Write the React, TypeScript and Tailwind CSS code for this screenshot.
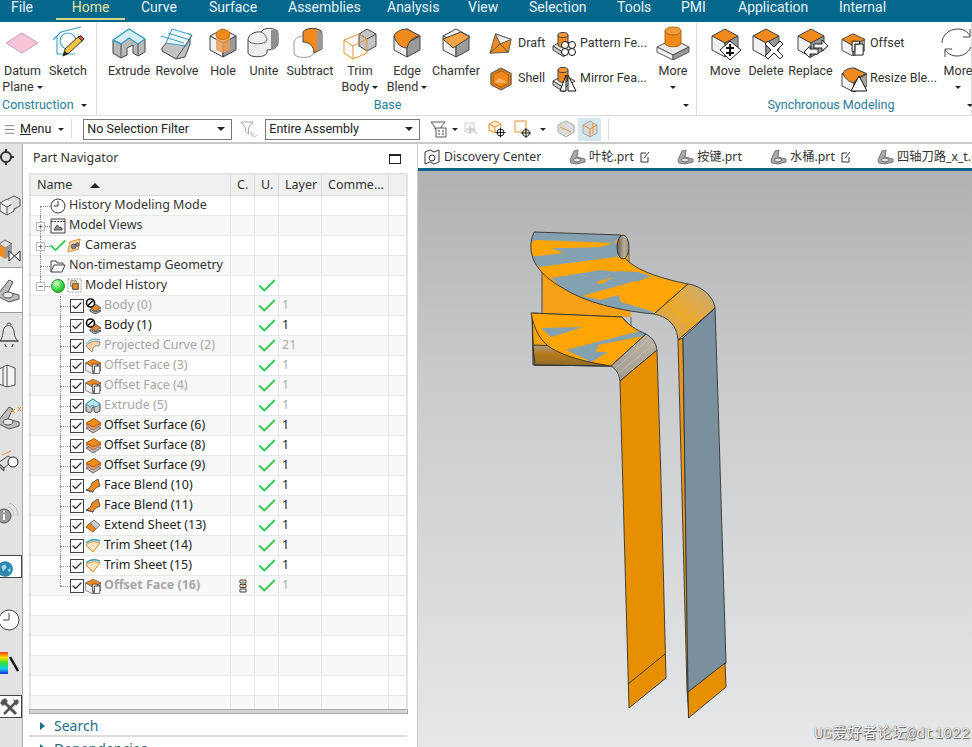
import type { ReactNode } from "react";
import { Check, Menu as MenuIcon } from "lucide-react";

const tabs = [
  { name: "File", width: 56, left: 11 },
  { name: "Home", width: 69, left: 16 },
  { name: "Curve", width: 68, left: 16 },
  { name: "Surface", width: 79, left: 16 },
  { name: "Assemblies", width: 99, left: 16 },
  { name: "Analysis", width: 81, left: 16 },
  { name: "View", width: 61, left: 16 },
  { name: "Selection", width: 88, left: 16 },
  { name: "Tools", width: 64, left: 16 },
  { name: "PMI", width: 57, left: 16 },
  { name: "Application", width: 101, left: 16 },
  { name: "Internal", width: 80, left: 16 },
];

const Caret = ({ className = "" }: { className?: string }) => (
  <span className={`inline-block w-0 h-0 border-x-[3px] border-x-transparent border-t-[3px] border-t-[#222] ${className}`} />
);

const Icon = ({ size = 34, box = 34, children }: { size?: number; box?: number; children: ReactNode }) => (
  <svg width={size} height={size} viewBox={`0 0 ${box} ${box}`} className="shrink-0" strokeLinejoin="round">
    {children}
  </svg>
);

const Faces = ({ top = "#eeeeee", left = "#f1f1f1", right = "#9a9a9a" }: { top?: string; left?: string; right?: string }) => (
  <g stroke="#444" strokeWidth="1">
    <path d="M17 3 30 10 17 17 4 10Z" fill={top} />
    <path d="M4 10 17 17V31L4 24Z" fill={left} />
    <path d="M30 10 17 17V31L30 24Z" fill={right} />
  </g>
);

const MiniFaces = () => (
  <g stroke="#444" strokeWidth="1">
    <path d="M13 2 26 8 13 15 1 8Z" fill="#f08a1c" />
    <path d="M1 8 13 15V26L1 20Z" fill="#f4f4f4" />
    <path d="M26 8 13 15V26L26 20Z" fill="#a5a5a5" />
  </g>
);

const DatumIcon = () => (
  <Icon><path d="M0 17 16 7 32 17 16 27Z" fill="#f8c4d8" stroke="#d59ab4" /></Icon>
);

const SketchIcon = () => (
  <Icon>
    <g fill="none" stroke="#3aa0c0" strokeWidth="1.1">
      <path d="M2 14 10 6 30 1" />
      <path d="M6 10V28H24" />
      <circle cx="17" cy="15" r="8" />
    </g>
    <path d="M12 30 14 23 28 10 32 14 18 27Z" fill="#f4c542" stroke="#333" />
    <path d="M27 11 31 15 33 13 30 9.5Z" fill="#d9534f" stroke="#333" />
    <path d="M12 30 14 25 17 28Z" fill="#222" />
  </Icon>
);

const ExtrudeIcon = () => (
  <Icon>
    <path d="M1 14V27L9 32 15 29V22L21 19V27L26 30 33 26V13L17 3Z" fill="#b9b9b9" stroke="#444" />
    <path d="M1 14 17 3 33 13 26 18 17 12 9 18Z" fill="#d6eef6" stroke="#3aa0c0" strokeWidth="1.4" />
    <path d="M9 18V32M26 18V30" stroke="#555" />
  </Icon>
);

const RevolveIcon = () => (
  <Icon>
    <path d="M2 22 12 10 30 8 30 18 25 31 16 33 2 25Z" fill="#c2c2c2" stroke="#444" />
    <path d="M12 3 32 9 26 20 6 17Z" fill="#eef6f9" stroke="#3aa0c0" />
    <path d="M1 10 24 17M8 7 30 14" stroke="#3aa0c0" fill="none" />
    <path d="M16 33 25 20 32 9" fill="none" stroke="#555" />
  </Icon>
);

const HoleIcon = () => (
  <Icon>
    <Faces />
    <path d="M10 8V24L17 27 24 24V8Z" fill="#eb9c57" opacity="0.85" />
    <ellipse cx="17" cy="8.5" rx="7" ry="5" fill="#f08a1c" stroke="#c87010" />
  </Icon>
);

const UniteIcon = () => (
  <Icon>
    <path d="M1 14V27C2 32 18 32 20 27V24C28 24 31 20 31 17V7C30 1 16 1 14 6 7 5 1 9 1 14Z" fill="#eeeeee" stroke="#444" />
    <path d="M24 24C29 23 31 20 31 17V7C31 5 28 4 26 4L24 4Z" fill="#8e8e8e" />
    <path d="M1 14C2 19 19 19 20 14 20 11 18 8 14 6" fill="none" stroke="#666" />
  </Icon>
);

const SubtractIcon = () => (
  <Icon>
    <path d="M1 17V27C2 33 19 33 21 27V17" fill="#fff" stroke="#999" />
    <path d="M1 17C2 12 6 10 9 10" fill="none" stroke="#999" />
    <path d="M10 6V16C16 16 21 20 21 27L29 23V7C28 1 13 1 10 6Z" fill="#f08a1c" stroke="#444" />
    <path d="M24 4C28 5 29 6 29 8V23L24 25Z" fill="#999" />
  </Icon>
);

const TrimIcon = () => (
  <Icon>
    <path d="M16 8 24 3 33 8V20L24 25 16 20Z" fill="#c4c4c4" stroke="#444" />
    <path d="M16 8 24 13 33 8" fill="none" stroke="#444" />
    <path d="M1 14 16 8 24 13V27L10 33 1 27ZM1 14 10 20V33M10 20 24 13" fill="none" stroke="#e8912d" />
  </Icon>
);

const BlendIcon = () => (
  <Icon>
    <Faces top="#f08a1c" left="#eeeeee" />
    <path d="M4 10C6 5 12 3 17 3L30 10C24 11 19 14 17 22 12 22 6 18 4 10Z" fill="#f08a1c" stroke="#444" />
  </Icon>
);

const ChamferIcon = () => (
  <Icon>
    <Faces />
    <path d="M4 13 22 6 31 11 14 22Z" fill="#f5a445" stroke="#444" />
  </Icon>
);

const DraftIcon = () => (
  <Icon size={24} box={26}>
    <path d="M7 2 24 8 21 22 1 23Z" fill="#f08a1c" stroke="#555" />
    <path d="M7 2 24 8 12 13Z" fill="#eeeeee" stroke="#555" />
    <path d="M12 13 1 23M12 13 21 22" stroke="#555" fill="none" />
  </Icon>
);

const ShellIcon = () => (
  <Icon size={24} box={26}>
    <path d="M13 1 24 7V19L13 25 2 19V7Z" fill="#d98020" stroke="#444" />
    <path d="M13 4 21 8.5V17.5L13 22 5 17.5V8.5Z" fill="#f08a1c" stroke="#a65d10" />
    <path d="M5 17 11 12 21 17" fill="#f6b26b" />
  </Icon>
);

const FeatureBase = () => (
  <g stroke="#444">
    <path d="M1 15 12 9 23 15 12 22Z" fill="#e8e8e8" />
    <path d="M1 15V19L12 26V22Z" fill="#cccccc" />
    <path d="M6 4V14C6 17 16 17 16 14V4Z" fill="#f08a1c" />
    <ellipse cx="11" cy="4" rx="5" ry="2.5" fill="#f59a35" />
  </g>
);

const PatternIcon = () => (
  <Icon size={26} box={26}>
    <FeatureBase />
    <g fill="#fff" stroke="#111">
      <circle cx="13" cy="14" r="3.5" /><circle cx="20" cy="14" r="3.5" />
      <circle cx="13" cy="21" r="3.5" /><circle cx="20" cy="21" r="3.5" />
    </g>
  </Icon>
);

const MirrorIcon = () => (
  <Icon size={26} box={26}>
    <FeatureBase />
    <path d="M8 25 14 9V25ZM16 25V9L24 25Z" fill="#fff" stroke="#111" />
  </Icon>
);

const MoreIcon = () => (
  <Icon>
    <path d="M1 21 17 13 33 21 17 29Z" fill="#e8e8e8" stroke="#555" />
    <path d="M1 21V26L17 34V29Z" fill="#f3f3f3" stroke="#555" />
    <path d="M33 21V26L17 34V29Z" fill="#999" stroke="#555" />
    <path d="M9 5V17C9 22 25 22 25 17V5Z" fill="#f08a1c" stroke="#b36a14" />
    <ellipse cx="17" cy="5" rx="8" ry="4" fill="#f59a35" stroke="#b36a14" />
  </Icon>
);

const MoveIcon = () => (
  <Icon>
    <Faces top="#f08a1c" />
    <path d="M22 15 33 24 22 34 12 24Z" fill="#fff" stroke="#222" />
    <path d="M18 21H21V18H23V21H26V23H23V26H26V28H23V30H21V28H18V26H21V23H18Z" fill="#111" />
  </Icon>
);

const DeleteIcon = () => (
  <Icon>
    <Faces top="#f08a1c" />
    <path d="M16 18 19 15 25 21 31 15 34 18 28 24 34 30 31 33 25 27 19 33 16 30 22 24Z" fill="#fff" stroke="#222" />
  </Icon>
);

const ReplaceIcon = () => (
  <Icon>
    <Faces top="#f08a1c" />
    <path d="M20 18H28V14L34 20 28 25V22H20Z" fill="#fff" stroke="#222" />
    <path d="M24 23H16V20L10 26 16 32V28H24Z" fill="#fff" stroke="#222" />
  </Icon>
);

const OffsetSmall = ({ size = 24 }: { size?: number }) => (
  <Icon size={size} box={26}>
    <MiniFaces />
    <path d="M15 13H24V25H15Z" fill="#fff" stroke="#111" />
    <path d="M12 10H20V13H15V21H12Z" fill="#fff" stroke="#111" />
  </Icon>
);

const ResizeIcon = () => (
  <Icon size={26} box={26}>
    <MiniFaces />
    <path d="M2 7C4 3 9 2 13 2L26 8C21 9 15 12 13 17 8 16 3 12 2 7Z" fill="#f08a1c" stroke="#444" />
    <path d="M18 10 26 25H10Z" fill="#fff" stroke="#111" />
  </Icon>
);

const RefreshIcon = () => (
  <Icon>
    <g fill="none" stroke="#444" strokeWidth="1">
      <path d="M1 17C1 9 8 3 17 3 23 3 27 6 29 10" />
      <path d="M29 3V11H22" />
      <path d="M30 21C27 27 22 30 16 30 10 30 6 27 4 24" />
      <path d="M4 31V23H11" />
    </g>
  </Icon>
);

const LargeButton = ({ width, icon, label, second, caret }: { width: number; icon: ReactNode; label: string; second?: string; caret?: boolean }) => (
  <div className="flex flex-col items-center shrink-0" style={{ width }}>
    {icon}
    <div className="mt-[3px] text-center leading-4 whitespace-nowrap">
      <div>{label}</div>
      {caret && (
        <div className="flex items-center justify-center gap-[3px] h-4">
          {second}
          <Caret />
        </div>
      )}
    </div>
  </div>
);

const SmallButton = ({ icon, label, gap = 5 }: { icon: ReactNode; label: string; gap?: number }) => (
  <div className="flex items-center h-[35px] whitespace-nowrap" style={{ gap }}>
    {icon}
    <span>{label}</span>
  </div>
);

const RibbonGroup = ({ width, label, children, labelClass = "justify-center", caretClass = "right-[7px]" }: { width: number; label: string; children: ReactNode; labelClass?: string; caretClass?: string }) => (
  <div className="relative flex flex-col h-full shrink-0 border-r border-[#dcdcdc]" style={{ width }}>
    <div className="flex-1 flex items-start pt-[4px]">{children}</div>
    <div className={`flex h-[20px] items-center text-[#2b7c99] ${labelClass}`}>{label}</div>
    <Caret className={`absolute bottom-[8px] ${caretClass}`} />
  </div>
);

const Ribbon = () => (
  <div className="flex h-[94px] shrink-0 text-[12.5px] text-[#333] bg-white border-b border-[#dcdcdc] overflow-hidden [font-family:Roboto,sans-serif]">
    <RibbonGroup width={97} label="Construction" labelClass="justify-start pl-[2px]" caretClass="right-[9px]">
      <LargeButton width={45} icon={<DatumIcon />} label="Datum" second="Plane" caret />
      <LargeButton width={46} icon={<SketchIcon />} label="Sketch" />
    </RibbonGroup>
    <RibbonGroup width={600} label="Base" labelClass="justify-center pr-[18px]">
      <div className="w-[9px] shrink-0" />
      <LargeButton width={46} icon={<ExtrudeIcon />} label="Extrude" />
      <LargeButton width={50} icon={<RevolveIcon />} label="Revolve" />
      <LargeButton width={42} icon={<HoleIcon />} label="Hole" />
      <LargeButton width={40} icon={<UniteIcon />} label="Unite" />
      <LargeButton width={52} icon={<SubtractIcon />} label="Subtract" />
      <LargeButton width={48} icon={<TrimIcon />} label="Trim" second="Body" caret />
      <LargeButton width={46} icon={<BlendIcon />} label="Edge" second="Blend" caret />
      <LargeButton width={52} icon={<ChamferIcon />} label="Chamfer" />
      <div className="flex flex-col w-[70px] shrink-0 pl-[7px]">
        <SmallButton icon={<DraftIcon />} label="Draft" />
        <SmallButton icon={<ShellIcon />} label="Shell" />
      </div>
      <div className="flex flex-col w-[98px] shrink-0">
        <SmallButton icon={<PatternIcon />} label="Pattern Fe..." gap={2} />
        <SmallButton icon={<MirrorIcon />} label="Mirror Fea..." gap={2} />
      </div>
      <LargeButton width={46} icon={<MoreIcon />} label="More" caret />
    </RibbonGroup>
    <RibbonGroup width={275} label="Synchronous Modeling" labelClass="justify-center pr-[6px]" caretClass="right-[-2px]">
      <div className="w-[6px] shrink-0" />
      <LargeButton width={44} icon={<MoveIcon />} label="Move" />
      <LargeButton width={38} icon={<DeleteIcon />} label="Delete" />
      <LargeButton width={51} icon={<ReplaceIcon />} label="Replace" />
      <div className="flex flex-col w-[99px] shrink-0 pl-[5px]">
        <SmallButton icon={<OffsetSmall />} label="Offset" />
        <SmallButton icon={<ResizeIcon />} label="Resize Ble..." gap={3} />
      </div>
      <LargeButton width={46} icon={<RefreshIcon />} label="More" caret />
    </RibbonGroup>
  </div>
);

const SelectBox = ({ width, label }: { width: number; label: string }) => (
  <div className="flex items-center justify-between h-[21px] px-[3px] border border-[#777] bg-white shrink-0" style={{ width }}>
    <span>{label}</span>
    <Caret className="border-x-[4px] border-t-[4px] mr-[3px]" />
  </div>
);

const ToolGlyph = ({ children }: { children: ReactNode }) => (
  <svg width="18" height="18" viewBox="0 0 18 18" className="shrink-0" fill="none">
    {children}
  </svg>
);

const Toolbar = () => (
  <div className="flex items-center h-[28px] shrink-0 pl-[3px] text-[12.5px] text-[#222] bg-white border-b-2 border-[#c8c8c8] [font-family:Roboto,sans-serif]">
    <MenuIcon size={13} strokeWidth={1} />
    <span className="ml-[4px]"><span className="underline">M</span>enu</span>
    <Caret className="ml-[7px]" />
    <div className="w-px h-[20px] bg-[#ddd] ml-[7px] mr-[11px]" />
    <SelectBox width={149} label="No Selection Filter" />
    <div className="w-[33px] flex justify-center">
      <ToolGlyph>
        <path d="M1 2H13L8.5 8V14L5.5 11.5V8Z" stroke="#aaa" />
        <path d="M17 15C16 17 12 17 11 14M11 11V14H14" stroke="#bbb" />
      </ToolGlyph>
    </div>
    <SelectBox width={155} label="Entire Assembly" />
    <div className="ml-[10px] flex items-center gap-[1px]">
      <ToolGlyph>
        <path d="M1 2H15L11 7V9H5V7Z" stroke="#555" />
        <path d="M6 8H16V17H6Z" fill="#fff" stroke="#555" />
        <path d="M8 11H10M12 11H14M8 14H10M12 14H14" stroke="#333" />
      </ToolGlyph>
      <Caret className="ml-[3px]" />
    </div>
    <div className="ml-[6px]">
      <ToolGlyph>
        <path d="M1 3H10V12H1Z" stroke="#ccc" />
        <path d="M6 5V14M2 9H11M12 14A3 3 0 1 0 6 12" stroke="#bbb" />
      </ToolGlyph>
    </div>
    <div className="ml-[6px]">
      <ToolGlyph>
        <path d="M7 1 13 4 7 7 1 4ZM1 4V10L7 13V7M13 4V7" fill="#fbe9d2" stroke="#e8912d" />
        <circle cx="12.5" cy="12.5" r="3.5" stroke="#222" />
        <path d="M12.5 7.5V17.5M7.5 12.5H17.5" stroke="#222" />
      </ToolGlyph>
    </div>
    <div className="ml-[8px]">
      <ToolGlyph>
        <path d="M1 1H12V12H1Z" fill="#fff" stroke="#e8912d" />
        <circle cx="12" cy="13" r="3.5" stroke="#222" />
        <path d="M12 8V18M7 13H17" stroke="#222" />
      </ToolGlyph>
    </div>
    <Caret className="ml-[8px]" />
    <div className="ml-[11px]">
      <ToolGlyph>
        <path d="M9 1 17 5V12L9 17 1 12V5Z" fill="#ddd" stroke="#aaa" />
        <path d="M3 7 14 12" stroke="#e8912d" />
      </ToolGlyph>
    </div>
    <div className="flex items-center justify-center w-[23px] h-[23px] ml-[3px] bg-[#d4e8ee]">
      <ToolGlyph>
        <path d="M9 1 16 5V13L9 17 2 13V5Z" fill="#d8d8d8" stroke="#aaa" />
        <path d="M2 5 9 9 16 5M9 9V17M12 3V14" stroke="#e8912d" />
      </ToolGlyph>
    </div>
    <div className="w-px h-[22px] bg-[#ddd] ml-[7px]" />
  </div>
);

const SideIcon = ({ children, className = "" }: { children: ReactNode; className?: string }) => (
  <svg width="26" height="26" viewBox="0 0 26 26" fill="none" className={`shrink-0 ml-[-4px] ${className}`}>
    {children}
  </svg>
);

const PartShape = () => (
  <g stroke="#555">
    <path d="M3 16 13 3 17 5 12 15 23 18 23 22 13 25 3 20Z" fill="#bdbdbd" />
    <ellipse cx="12" cy="18" rx="5" ry="3" fill="#e8e8e8" />
  </g>
);

const SideBar = () => (
  <div className="flex flex-col w-[23px] shrink-0 bg-[#e2e2e2] border-r border-[#a9a9a9] overflow-hidden">
    <div className="flex items-center h-[26px] shrink-0">
      <SideIcon><circle cx="10" cy="13" r="5" stroke="#333" strokeWidth="2" /><path d="M10 5V8M10 18V21M2 13H5M15 13H18" stroke="#333" strokeWidth="2" /></SideIcon>
    </div>
    <div className="flex items-center h-[62px] shrink-0 pt-[12px]">
      <SideIcon>
        <path d="M4 9 11 5 18 9 11 13ZM4 9V17L11 21V13M18 9V17L11 21" fill="#f1f1f1" stroke="#555" />
        <path d="M12 5 18 2 24 5V12L18 15" fill="#ddd" stroke="#555" />
      </SideIcon>
    </div>
    <div className="flex items-center h-[36px] shrink-0 border-b border-[#9a9a9a]">
      <SideIcon>
        <path d="M3 7 9 3 16 7 9 11Z" fill="#ddd" stroke="#666" />
        <path d="M3 7V18L9 22V11Z" fill="#f08a1c" />
        <path d="M16 7V18L9 22V11Z" fill="#999" />
        <path d="M13 14 24 24V14L13 24Z" fill="#fff" stroke="#222" />
      </SideIcon>
    </div>
    <div className="flex items-center h-[45px] shrink-0 bg-white border-b border-[#9a9a9a]">
      <SideIcon><PartShape /></SideIcon>
    </div>
    <div className="flex items-center h-[41px] shrink-0">
      <SideIcon>
        <path d="M4 20C8 16 6 8 9 6 11 4 14 4 16 6 19 8 17 16 22 20Z" stroke="#444" />
        <path d="M11 4A2 2 0 0 1 15 4M9 23A4 4 0 0 0 17 23M3 20H23" stroke="#444" />
      </SideIcon>
    </div>
    <div className="flex items-center h-[42px] shrink-0">
      <SideIcon>
        <path d="M3 7 11 3 19 6V23L11 25 3 22ZM11 3V25M7 5V24" fill="#f4f4f4" stroke="#555" />
      </SideIcon>
    </div>
    <div className="flex items-center h-[42px] shrink-0">
      <SideIcon><PartShape /><path d="M15 5 19 9M22 3 25 7M25 3 22 7M15 9 19 5" stroke="#e8912d" /></SideIcon>
    </div>
    <div className="flex items-center h-[44px] shrink-0">
      <SideIcon>
        <path d="M2 16 12 9 18 13 8 21Z" fill="#ddd" stroke="#444" />
        <path d="M2 16V19L8 24V21Z" fill="#aaa" stroke="#444" />
        <path d="M6 8 15 4" stroke="#e8912d" />
        <circle cx="17" cy="15" r="5" fill="#fff" stroke="#222" />
      </SideIcon>
    </div>
    <div className="flex items-center h-[66px] shrink-0">
      <SideIcon>
        <circle cx="8" cy="14" r="7" fill="#9a9a9a" stroke="#555" />
        <path d="M8 12V18" stroke="#fff" strokeWidth="2" />
        <circle cx="8" cy="9.5" r="1" fill="#fff" />
        <path d="M12 5C16 6 18 10 18 14M13 1C19 3 22 8 22 14" stroke="#bbb" />
      </SideIcon>
    </div>
    <div className="flex items-end h-[23px] shrink-0 mt-[7px] bg-white border-y border-r border-[#444]">
      <SideIcon className="-mb-[2px] w-[20px] h-[20px]">
        <circle cx="12" cy="13" r="10" fill="#2e87b0" />
        <path d="M7 9 12 7 14 11 9 16ZM15 14 19 12 18 18Z" fill="#a8d8ea" />
      </SideIcon>
    </div>
    <div className="flex items-center h-[42px] shrink-0 mt-[21px]">
      <SideIcon>
        <circle cx="13" cy="13" r="10" fill="#fff" stroke="#444" />
        <path d="M13 6V13H7" stroke="#444" />
      </SideIcon>
    </div>
    <div className="flex items-center h-[44px] shrink-0">
      <svg width="22" height="26" viewBox="0 0 22 26" className="shrink-0">
        <defs>
          <linearGradient id="rainbow" x1="0" y1="0" x2="0" y2="1">
            <stop offset="0" stopColor="#f23b16" /><stop offset="0.25" stopColor="#ffe000" />
            <stop offset="0.5" stopColor="#27e03b" /><stop offset="0.75" stopColor="#18cfe6" />
            <stop offset="1" stopColor="#1a2be0" />
          </linearGradient>
        </defs>
        <rect x="0" y="2" width="8" height="22" fill="url(#rainbow)" />
        <path d="M10 7 18 21" stroke="#111" strokeWidth="2.5" />
      </svg>
    </div>
    <div className="flex items-center h-[23px] shrink-0 mt-[10px] bg-white border border-l-0 border-[#444]">
      <svg width="20" height="20" viewBox="0 0 20 20" fill="none" className="shrink-0">
        <path d="M2 3 16 17" stroke="#555" strokeWidth="3" />
        <path d="M18 3 4 17" stroke="#555" strokeWidth="2.5" />
        <path d="M0 6 5 1 8 4 3 9ZM13 2 19 5 16 9Z" fill="#555" />
      </svg>
    </div>
  </div>
);

const GreenCheck = () => <Check size={22} strokeWidth={2.2} className="shrink-0 -mx-[2px] text-[#3cc95a]" />;

const ClockIcon = () => (
  <Icon size={16} box={16}>
    <circle cx="8" cy="8" r="7" fill="#fff" stroke="#333" />
    <path d="M8 3V8H4" fill="none" stroke="#333" />
  </Icon>
);
const ViewsIcon = () => (
  <Icon size={16} box={16}>
    <path d="M1 1H15V15H1Z" fill="#f4f4f4" stroke="#444" />
    <path d="M1 3.5H15" stroke="#444" strokeDasharray="2 1" />
    <path d="M4 12 7 7 9 9 12 10 12 12Z" fill="#888" stroke="#555" />
  </Icon>
);
const CameraIcon = () => (
  <Icon size={15} box={16}>
    <path d="M3 4 14 1 12 12 1 15Z" fill="#f6d8a8" stroke="#d68a2a" />
    <circle cx="7" cy="9" r="2.5" fill="#888" stroke="#555" />
    <circle cx="11" cy="7" r="2" fill="#888" stroke="#555" />
  </Icon>
);
const FolderIcon = () => (
  <Icon size={16} box={16}>
    <path d="M1 14V3H6L7 5H13V7" fill="none" stroke="#444" />
    <path d="M1 14 4 7H15L12 14Z" fill="#fff" stroke="#444" />
  </Icon>
);
const HistoryBox = () => (
  <Icon size={15} box={16}>
    <path d="M1 1H15V15H1Z" fill="#fff" stroke="#999" strokeDasharray="2 1" />
    <path d="M4 3H10V6H12V12H6V9H4Z" fill="#f7d4a6" stroke="#777" />
    <path d="M6 6H12V12H6Z" fill="#f08a1c" stroke="#555" />
  </Icon>
);
const BodyIcon = () => (
  <Icon size={16} box={16}>
    <path d="M5 9 10 6 16 10 10 13Z" fill="#f08a1c" stroke="#555" />
    <path d="M5 11 10 14 16 12V13L10 16 5 13Z" fill="#bbb" stroke="#555" />
    <circle cx="5.5" cy="5" r="4" fill="#fff" stroke="#111" strokeWidth="1.6" />
    <path d="M3 7.5 8 2.5" stroke="#111" strokeWidth="1.6" />
  </Icon>
);
const CurveIcon = () => (
  <Icon size={16} box={16}>
    <path d="M1 8C5 3 10 2 15 4L14 8C10 7 8 9 7 14Z" fill="#f6d0a0" stroke="#8a8a8a" />
    <path d="M1 6C5 1 10 0 15 2" fill="none" stroke="#3aa0c0" />
  </Icon>
);
const ExtrudeSmall = () => (
  <Icon size={16} box={16}>
    <path d="M1 6V13L5 15 7 13V10L9 9V13L11 15 15 13V6L8 1Z" fill="#c8c8c8" stroke="#444" />
    <path d="M1 6 8 1 15 6 11 9 8 7 5 9Z" fill="#bfe3f0" stroke="#3aa0c0" />
  </Icon>
);
const OffsetSurfaceIcon = () => (
  <Icon size={16} box={16}>
    <path d="M1 10 9 6 16 10 8 15Z" fill="#bbb" stroke="#666" />
    <path d="M1 7 9 3 16 7 8 12Z" fill="#e7a160" stroke="#a66" />
    <path d="M1 5 9 0.5 16 5 8 9Z" fill="#f08a1c" stroke="#a65d10" />
  </Icon>
);
const FaceBlendIcon = () => (
  <Icon size={16} box={16}>
    <path d="M1 12C4 11 6 9 7 5L13 1 15 8C12 9 9 11 8 14Z" fill="#f08a1c" stroke="#555" />
    <path d="M1 12 8 14" stroke="#555" />
  </Icon>
);
const ExtendIcon = () => (
  <Icon size={16} box={16}>
    <path d="M1 9 8 14 11 11 5 5Z" fill="#f08a1c" stroke="#a65d10" />
    <path d="M5 5 9 2 15 7 11 11Z" fill="#cfcfcf" stroke="#777" />
  </Icon>
);
const TrimSheetIcon = () => (
  <Icon size={16} box={16}>
    <path d="M1 7C5 3 10 3 15 5L8 14Z" fill="#fbe3c4" stroke="#d68a2a" />
    <path d="M1 5C5 1 10 1 15 3" fill="none" stroke="#3aa0c0" strokeWidth="1.4" />
  </Icon>
);

type Row = { name: string; icon: ReactNode; muted?: boolean; bold?: boolean; layer?: string };

const features: Row[] = [
  { name: "Body (0)", icon: <BodyIcon />, muted: true, layer: "1" },
  { name: "Body (1)", icon: <BodyIcon />, layer: "1" },
  { name: "Projected Curve (2)", icon: <CurveIcon />, muted: true, layer: "21" },
  { name: "Offset Face (3)", icon: <OffsetSmall size={16} />, muted: true, layer: "1" },
  { name: "Offset Face (4)", icon: <OffsetSmall size={16} />, muted: true, layer: "1" },
  { name: "Extrude (5)", icon: <ExtrudeSmall />, muted: true, layer: "1" },
  { name: "Offset Surface (6)", icon: <OffsetSurfaceIcon />, layer: "1" },
  { name: "Offset Surface (8)", icon: <OffsetSurfaceIcon />, layer: "1" },
  { name: "Offset Surface (9)", icon: <OffsetSurfaceIcon />, layer: "1" },
  { name: "Face Blend (10)", icon: <FaceBlendIcon />, layer: "1" },
  { name: "Face Blend (11)", icon: <FaceBlendIcon />, layer: "1" },
  { name: "Extend Sheet (13)", icon: <ExtendIcon />, layer: "1" },
  { name: "Trim Sheet (14)", icon: <TrimSheetIcon />, layer: "1" },
  { name: "Trim Sheet (15)", icon: <TrimSheetIcon />, layer: "1" },
  { name: "Offset Face (16)", icon: <OffsetSmall size={16} />, muted: true, bold: true, layer: "1" },
];

const Columns = ({ index, name, c, u, layer, muted }: { index: number; name?: ReactNode; c?: ReactNode; u?: boolean; layer?: string; muted?: boolean }) => (
  <div className={`flex h-[20px] shrink-0 border-b border-[#e8e8e8] ${index % 2 ? "bg-[#f8f8f8]" : "bg-white"}`}>
    <div className="relative flex items-center w-[200px] shrink-0 border-r border-[#e8e8e8]">{name}</div>
    <div className="flex items-center justify-center w-[24px] shrink-0 border-r border-[#e8e8e8]">{c}</div>
    <div className="flex items-center justify-center w-[24px] shrink-0 border-r border-[#e8e8e8]">{u && <GreenCheck />}</div>
    <div className={`flex items-center pl-[3px] w-[43px] shrink-0 border-r border-[#e8e8e8] ${muted ? "text-[#aaa]" : "text-[#222]"}`}>{layer}</div>
    <div className="w-[67px] shrink-0 border-r border-[#e8e8e8]" />
    <div className="flex-1" />
  </div>
);

const Expander = ({ sign }: { sign: string }) => (
  <span className="absolute left-[5px] top-[6px] z-10 flex items-center justify-center w-[9px] h-[9px] bg-white border border-[#bbb] text-[9px] leading-none text-[#222]">
    {sign}
  </span>
);

const TopRow = ({ index, icons, label, sign, u, last }: { index: number; icons: ReactNode; label: string; sign?: string; u?: boolean; last?: boolean }) => (
  <Columns
    index={index}
    u={u}
    name={
      <>
        <span className={`absolute left-[9px] border-l border-dotted border-[#888] ${index === 0 ? "top-[10px] h-[10px]" : last ? "top-0 h-[10px]" : "top-0 h-[20px]"}`} />
        <span className="absolute left-[9px] top-[10px] w-[10px] border-t border-dotted border-[#888]" />
        {sign && <Expander sign={sign} />}
        <div className="relative flex items-center gap-[3px] ml-[19px] text-[#333] whitespace-nowrap">
          {icons}
          <span>{label}</span>
        </div>
      </>
    }
  />
);

const DoubleIcons = ({ first, second }: { first: ReactNode; second: ReactNode }) => (
  <div className="flex items-center gap-[2px] ml-px">
    <span className="flex items-center justify-center w-[14px] h-[14px] shrink-0">{first}</span>
    {second}
  </div>
);

const FeatureRow = ({ row, index, last }: { row: Row; index: number; last: boolean }) => (
  <Columns
    index={index}
    u
    layer={row.layer}
    muted={row.muted}
    c={
      row.bold ? (
        <svg width="8" height="14" viewBox="0 0 8 14" fill="none" stroke="#444">
          <path d="M1 1H7V4H1ZM1 5.5H7V8.5H1ZM1 10H7V13H1Z" />
          <path d="M3 2H5M3 6.5H5" stroke="#e8912d" strokeWidth="2" />
        </svg>
      ) : undefined
    }
    name={
      <>
        <span className={`absolute left-[29px] top-0 border-l border-dotted border-[#888] ${last ? "h-[10px]" : "h-[20px]"}`} />
        <span className="absolute left-[29px] top-[10px] w-[10px] border-t border-dotted border-[#888]" />
        <div className="relative flex items-center ml-[39px] whitespace-nowrap">
          <span className="flex items-center justify-center w-[14px] h-[14px] bg-white border border-[#444] shrink-0">
            <Check size={12} strokeWidth={2.5} className="text-[#333]" />
          </span>
          <span className="ml-px">{row.icon}</span>
          <span className={`ml-[3px] ${row.muted ? "text-[#a6a6a6]" : "text-[#222]"} ${row.bold ? "font-bold" : ""}`}>{row.name}</span>
        </div>
      </>
    }
  />
);

const GreenBall = () => <span className="w-[14px] h-[14px] rounded-full border border-[#2a8a2a] bg-[radial-gradient(circle_at_35%_30%,#d6ffd0,#35d13c_55%,#1c9a22)] shrink-0" />;

const HeaderCell = ({ width, children }: { width: number; children?: ReactNode }) => (
  <div className="flex items-center h-full pl-[6px] border-r border-[#d9d9d9] shrink-0 overflow-hidden whitespace-nowrap" style={{ width }}>
    {children}
  </div>
);

const Navigator = () => (
  <div className="flex flex-col w-[394px] shrink-0 bg-white text-[12.5px]">
    <div className="flex items-center justify-between h-[29px] pl-[10px] pr-[16px] text-[#333] shrink-0">
      <span>Part Navigator</span>
      <span className="w-[12px] h-[10px] border border-[#222] border-t-2" />
    </div>
    <div className="flex flex-col h-[536px] mx-[6px] w-[379px] border-x-2 border-t-2 border-[#e3e3e3] overflow-hidden shrink-0">
      <div className="flex h-[21px] shrink-0 bg-[#f0f0f0] border-b border-[#d9d9d9] text-[#333]">
        <HeaderCell width={200}>
          <span>Name</span>
          <span className="ml-[18px] w-0 h-0 border-x-[5px] border-x-transparent border-b-[5px] border-b-[#222]" />
        </HeaderCell>
        <HeaderCell width={24}>C.</HeaderCell>
        <HeaderCell width={24}>U.</HeaderCell>
        <HeaderCell width={43}>Layer</HeaderCell>
        <HeaderCell width={67}>Comme...</HeaderCell>
      </div>
      <div className="flex flex-col flex-1 overflow-hidden">
        <TopRow index={0} icons={<ClockIcon />} label="History Modeling Mode" />
        <TopRow index={1} icons={<ViewsIcon />} label="Model Views" sign="+" />
        <TopRow index={2} icons={<DoubleIcons first={<Check size={20} strokeWidth={2.4} className="shrink-0 text-[#3cc95a]" />} second={<CameraIcon />} />} label="Cameras" sign="+" />
        <TopRow index={3} icons={<FolderIcon />} label="Non-timestamp Geometry" />
        <TopRow index={4} icons={<DoubleIcons first={<GreenBall />} second={<HistoryBox />} />} label="Model History" sign="−" u last />
        {features.map((row, i) => (
          <FeatureRow key={row.name} row={row} index={i + 5} last={i === features.length - 1} />
        ))}
        {[20, 21, 22, 23, 24, 25].map((i) => (
          <Columns key={i} index={i} />
        ))}
      </div>
    </div>
    <div className="h-[5px] w-[379px] mx-[6px] bg-[#d4d4d4] border border-[#aaa] shrink-0" />
    <div className="flex items-center h-[21px] mt-[2px] mx-[6px] pl-[11px] w-[378px] text-[14px] text-[#1f6c88] border-b-2 border-[#dcdcdc] shrink-0">
      <span className="w-0 h-0 border-y-[4px] border-y-transparent border-l-[5px] border-l-[#1f6c88] mr-[9px]" />
      Search
    </div>
    <div className="flex items-center h-[22px] mx-[6px] pl-[11px] text-[14px] text-[#1f6c88] shrink-0">
      <span className="w-0 h-0 border-y-[4px] border-y-transparent border-l-[5px] border-l-[#1f6c88] mr-[9px]" />
      Dependencies
    </div>
  </div>
);

const PartGlyph = () => (
  <svg width="17" height="16" viewBox="0 0 17 16" className="shrink-0">
    <path d="M1 11 5 2 9 1 8 8 16 10V13L8 15 2 14Z" fill="#aaa" stroke="#777" />
    <ellipse cx="8" cy="11" rx="3.5" ry="2" fill="#e8e8e8" stroke="#666" />
  </svg>
);

const NoteGlyph = () => (
  <svg width="10" height="12" viewBox="0 0 10 12" fill="none" stroke="#333" className="shrink-0">
    <path d="M8 6V11H1V2H6M4 7 9 1" />
  </svg>
);

const fileTabs = [
  { name: "叶轮.prt", note: true, width: 108 },
  { name: "按键.prt", note: false, width: 93 },
  { name: "水桶.prt", note: true, width: 107 },
  { name: "四轴刀路_x_t.prt", note: false, width: 120 },
];

const FileTabs = () => (
  <div className="flex items-center h-[27px] pt-[2px] shrink-0 bg-white border-b-[3px] border-[#0c6484] text-[12.25px] text-[#333] whitespace-nowrap overflow-hidden">
    <div className="flex items-center w-[151px] pl-[6px] gap-[4px] shrink-0">
      <svg width="16" height="16" viewBox="0 0 16 16" fill="none" stroke="#333" className="shrink-0">
        <path d="M1 3 6 1 10 3 15 1V13L10 15 6 13 1 15Z" />
        <circle cx="8" cy="9" r="3" />
      </svg>
      Discovery Center
    </div>
    {fileTabs.map((tab) => (
      <div key={tab.name} className="flex items-center gap-[3px] shrink-0" style={{ width: tab.width }}>
        <PartGlyph />
        <span>{tab.name}</span>
        {tab.note && <span className="ml-[3px]"><NoteGlyph /></span>}
      </div>
    ))}
  </div>
);

const topSheet = "M533 232 620 235C616 244 618 254 628 262 640 272 662 279 687 284L653 314C620 311 585 303 560 287 542 277 522 258 533 232Z";
const lowerSheet = "M530 313 621 317C626 324 635 330 645 334L610 366C585 362 565 357 550 348 538 340 533 328 530 313Z";

// model drawn in page coordinates, offset by the viewport's origin (417, 171)
const Model = () => (
  <svg width="555" height="576" viewBox="417 171 555 576" className="block">
    <defs>
      <linearGradient id="bottomShade" x1="0" y1="0" x2="0" y2="1">
        <stop offset="0" stopColor="#a89a80" />
        <stop offset="0.45" stopColor="#b87a18" />
        <stop offset="1" stopColor="#8c6a30" />
      </linearGradient>
      <linearGradient id="cyl" x1="0" y1="0" x2="1" y2="0">
        <stop offset="0" stopColor="#5f5a50" />
        <stop offset="0.6" stopColor="#bcae96" />
        <stop offset="1" stopColor="#8d8880" />
      </linearGradient>
      <linearGradient id="blendA" x1="0" y1="1" x2="1" y2="0">
        <stop offset="0" stopColor="#b8a488" />
        <stop offset="0.45" stopColor="#f0a823" />
        <stop offset="0.75" stopColor="#d9aa55" />
        <stop offset="1" stopColor="#a8a59a" />
      </linearGradient>
      <linearGradient id="blendB" x1="0" y1="1" x2="1" y2="0">
        <stop offset="0" stopColor="#a39d90" />
        <stop offset="1" stopColor="#b9b4a6" />
      </linearGradient>
      <clipPath id="topClip"><path d={topSheet} /></clipPath>
      <clipPath id="lowClip"><path d={lowerSheet} /></clipPath>
    </defs>
    <g stroke="#333" strokeWidth="0.9" strokeLinejoin="round">
      {/* back block of the top sheet */}
      <path d="M541 270 542 313 630 317 628 262 628 240 610 290Z" fill="#f5a015" stroke="none" />
      <path d="M541 270V313" fill="none" />
      <path d="M628 250V262M630 317V327" fill="none" stroke="#555" />

      {/* top sheet */}
      <path d={topSheet} fill="#ffa505" stroke="none" />
      <g clipPath="url(#topClip)" fill="#84a1b2" stroke="none">
        <path d="M530 232 623 233 613 243 535 240 528 243Z" />
        <path d="M613 243 620 243 622 256 538 267 528 257 563 253 550 248 567 248 600 247Z" />
        <path d="M550 278 600 270 615 272 613 277 595 282 597 284 638 280 581 296 600 300 617 295 620 302 640 308 653 312 652 316 600 305 567 294Z" />
        <path d="M615 271 637 272 650 276 638 281 600 284 613 277Z" />
      </g>
      <path d={topSheet} fill="none" />
      <ellipse cx="622" cy="247" rx="6" ry="12" fill="url(#cyl)" />

      {/* right blend and strips */}
      <path d="M687 284C702 286 713 298 714 308L677 340C676 326 668 317 653 314Z" fill="url(#blendA)" />
      <g fill="none" stroke="#b5ad98" strokeWidth="0.8" opacity="0.8">
        <path d="M660 318 692 288M666 322 699 292M670 328 705 297M674 334 710 303" />
      </g>
      <path d="M677 340 682 338 687 692 688 718 686 690Z" fill="#e8951a" />
      <path d="M682 338 714 308 717 400 725 663 687 692Z" fill="#7a909e" />
      <path d="M687 692 724 663 725 687 687.5 718Z" fill="#e68f00" />

      {/* lower block */}
      <path d="M531 313 621 317 630 327 610 366 533 365Z" fill="#f7a310" />
      <path d="M532 345 560 346 610 366 534 365Z" fill="url(#bottomShade)" />
      <path d="M531 313 532 365 610 366" fill="none" />

      {/* lower sheet */}
      <path d={lowerSheet} fill="#ffa505" stroke="none" />
      <g clipPath="url(#lowClip)" fill="#84a1b2" stroke="none">
        <path d="M540 328 582 327 550 337Z" />
        <path d="M565 350 643 330 647 335 597 345 595 352 607 352 590 362 580 357Z" />
      </g>
      <path d={lowerSheet} fill="none" />

      {/* left blend and strip */}
      <path d="M645 334C652 338 655 343 656 350L619 381C618 374 616 370 610 366Z" fill="url(#blendB)" />
      <g fill="none" stroke="#d0cabc" strokeWidth="0.8" opacity="0.8">
        <path d="M614 369 648 339M616 375 652 344" />
      </g>
      <path d="M619 381 656 350 660 480 665 678 628 708 625 600Z" fill="#e68f00" />
      <path d="M627 684 664 654" fill="none" />
    </g>
  </svg>
);

const Viewport = () => (
  <div className="relative flex-1 overflow-hidden bg-[linear-gradient(180deg,#b0b1b2_0%,#c9cacb_35%,#e6e7e8_100%)]">
    <Model />
    <span className="absolute right-[2px] bottom-[3px] text-[15px] leading-[18px] text-[#f6f6f6] whitespace-nowrap [font-family:'Liberation_Mono','Noto_Sans_CJK_SC',monospace] [text-shadow:0_0_1px_#444,1px_1px_1px_#666]">
      UG爱好者论坛@dt1022
    </span>
  </div>
);

const App = () => {
  return (
    <div className="flex flex-col w-[972px] h-[747px] overflow-hidden bg-white [font-family:'Noto_Sans','Noto_Sans_CJK_SC',sans-serif]">
      <div className="flex h-[22px] shrink-0 bg-[#04688c] text-[14px] text-[#e8f3f7] overflow-hidden [font-family:Roboto,sans-serif]">
        {tabs.map((tab) => (
          <div key={tab.name} className={`flex shrink-0 h-[20px] leading-[14px] whitespace-nowrap ${tab.name === "Home" ? "border-b-2 border-[#d8d48a] text-[#e6e29a] justify-center" : ""}`} style={{ width: tab.width, paddingLeft: tab.name === "Home" ? 0 : tab.left }}>
            <span>{tab.name}</span>
          </div>
        ))}
      </div>
      <Ribbon />
      <Toolbar />
      <div className="flex flex-1 min-h-0">
        <SideBar />
        <Navigator />
        <div className="flex flex-col flex-1 min-w-0 border-l border-[#ccc]">
          <FileTabs />
          <Viewport />
        </div>
      </div>
    </div>
  );
};

export default App;
